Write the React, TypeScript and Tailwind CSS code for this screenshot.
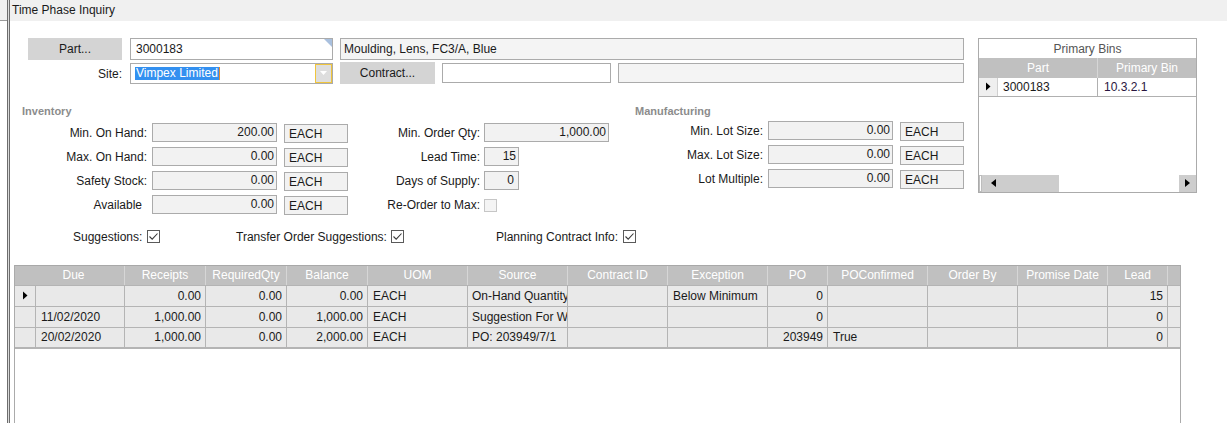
import React from "react";

const Check = ({ disabled = false }: { disabled?: boolean }) =>
  disabled ? (
    <div className="w-[13px] h-[13px] border border-[#c6c6c6] bg-[#f4f4f4]" />
  ) : (
    <div className="w-[13px] h-[13px] border border-[#5a5a5a] bg-white flex items-center justify-center">
      <svg width="11" height="11" viewBox="0 0 11 11">
        <path d="M1.5 5.5 L4.2 8.2 L9.5 2.5" fill="none" stroke="#3a3a3a" strokeWidth="1.1" />
      </svg>
    </div>
  );

const Arrow = () => (
  <svg width="6" height="9" viewBox="0 0 6 9">
    <path d="M1 0.5 L5.5 4.5 L1 8.5 Z" fill="#000" />
  </svg>
);

const Num = ({ v }: { v: string }) => (
  <div className="ml-[5px] w-[125px] h-[19px] border border-[#ababab] bg-[#f2f2f2] flex items-center justify-end pr-[2px] pb-[1px]">
    {v}
  </div>
);
const Each = () => (
  <div className="ml-[7px] mt-[2px] w-[64px] h-[19px] border border-[#ababab] bg-[#f2f2f2] flex items-center pl-[4px] pt-px">
    EACH
  </div>
);

type Row = string[];
const cols = [
  { w: "w-[89px]", a: "l" },
  { w: "w-[81px]", a: "r" },
  { w: "w-[81px]", a: "r" },
  { w: "w-[81px]", a: "r" },
  { w: "w-[100px]", a: "l" },
  { w: "w-[100px]", a: "s" },
  { w: "w-[100px]", a: "l" },
  { w: "w-[100px]", a: "l" },
  { w: "w-[60px]", a: "r" },
  { w: "w-[100px]", a: "l" },
  { w: "w-[90px]", a: "l" },
  { w: "w-[90px]", a: "l" },
  { w: "w-[60px]", a: "r" },
];
const heads = ["Receipts", "RequiredQty", "Balance", "UOM", "Source", "Contract ID", "Exception", "PO", "POConfirmed", "Order By", "Promise Date", "Lead"];
const headW = ["w-[81px]", "w-[81px]", "w-[81px]", "w-[100px]", "w-[100px]", "w-[100px]", "w-[100px]", "w-[60px]", "w-[100px]", "w-[90px]", "w-[90px]", "w-[60px]"];
const rows: Row[] = [
  ["", "0.00", "0.00", "0.00", "EACH", "On-Hand Quantity", "", "Below Minimum", "0", "", "", "", "15"],
  ["11/02/2020", "1,000.00", "0.00", "1,000.00", "EACH", "Suggestion For W", "", "", "0", "", "", "", "0"],
  ["20/02/2020", "1,000.00", "0.00", "2,000.00", "EACH", "PO: 203949/7/1", "", "", "203949", "True", "", "", "0"],
];

export default function App() {
  return (
    <div className="w-[1227px] h-[423px] overflow-hidden bg-white flex font-['Liberation_Sans',Arial,sans-serif] text-[12px] text-[#1a1a1a] leading-[14px]">
      {/* left frame */}
      <div className="w-[7px] flex flex-col">
        <div className="h-[21px] bg-[#f0f0f0] border-b border-[#9a9a9a]" />
      </div>
      <div className="w-px bg-[#6e6e6e]" />
      <div className="w-px bg-[#dcdcdc]" />
      <div className="w-px bg-[#6e6e6e]" />

      <div className="flex-1 flex flex-col">
        <div className="h-[21px] bg-[#f0f0f0] flex items-center pl-[2px]">Time Phase Inquiry</div>

        <div className="flex pt-[17px]">
          {/* left column */}
          <div className="w-[954px] flex flex-col">
            <div className="ml-[18px] flex h-[22px]">
              <div className="w-[94px] bg-[#d4d4d4] flex items-center justify-center">Part...</div>
              <div className="ml-[8px] w-[203px] border border-[#ababab] bg-white relative flex items-center pl-[5px]">
                3000183
                <svg className="absolute right-0 top-0" width="8" height="8" viewBox="0 0 8 8">
                  <path d="M0 0 L8 0 L8 8 Z" fill="#a9c0de" />
                </svg>
              </div>
              <div className="ml-[7px] w-[624px] border border-[#ababab] bg-[#f4f4f4] flex items-center pl-[3px]">
                Moulding, Lens, FC3/A, Blue
              </div>
            </div>
            <div className="ml-[18px] mt-[3px] flex h-[21px]">
              <div className="w-[94px] flex items-center justify-end pt-px">Site:</div>
              <div className="ml-[8px] w-[203px] border border-[#ababab] bg-white flex items-stretch">
                <div className="flex-1 flex items-center pl-[4px]">
                  <span className="bg-[#3390f0] text-white leading-[13px] px-px">Vimpex Limited</span>
                  <span className="w-px h-[13px] bg-[#e08a30]" />
                </div>
                <div className="w-[17px] bg-[#dedede] border border-[#f0c53c] flex items-center justify-center">
                  <svg width="7" height="4" viewBox="0 0 7 4">
                    <path d="M0 0 L7 0 L3.5 4 Z" fill="#fff" />
                  </svg>
                </div>
              </div>
              <div className="ml-[7px] w-[95px] h-[22px] -mt-px bg-[#d4d4d4] flex items-center justify-center">Contract...</div>
              <div className="ml-[7px] w-[169px] h-[20px] border border-[#ababab] bg-white" />
              <div className="ml-[7px] w-[346px] h-[20px] border border-[#ababab] bg-[#f4f4f4]" />
            </div>

            {/* fields */}
            <div className="flex mt-[20px]">
              <div className="ml-[12px] w-[326px] flex flex-col">
                <div className="h-[14px] text-[11px] font-bold text-[#8c8c8c]">Inventory</div>
                <div className="mt-[5px] flex flex-col gap-[5px]">
                  <div className="flex h-[19px] items-center">
                    <div className="w-[125px] text-right pt-px">Min. On Hand:</div>
                    <Num v="200.00" />
                    <Each />
                  </div>
                  <div className="flex h-[19px] items-center">
                    <div className="w-[125px] text-right pt-px">Max. On Hand:</div>
                    <Num v="0.00" />
                    <Each />
                  </div>
                  <div className="flex h-[19px] items-center">
                    <div className="w-[125px] text-right pt-px">Safety Stock:</div>
                    <Num v="0.00" />
                    <Each />
                  </div>
                  <div className="flex h-[19px] items-center">
                    <div className="w-[125px] text-right pr-[5px] pt-px">Available</div>
                    <Num v="0.00" />
                    <Each />
                  </div>
                </div>
              </div>

              <div className="w-[287px] pt-[19px] flex flex-col gap-[5px]">
                <div className="flex h-[19px] items-center">
                  <div className="w-[132px] text-right pt-px">Min. Order Qty:</div>
                  <div className="ml-[4px] w-[125px] h-[19px] border border-[#ababab] bg-[#f2f2f2] flex items-center justify-end pr-[2px] pb-[1px]">1,000.00</div>
                </div>
                <div className="flex h-[19px] items-center">
                  <div className="w-[132px] text-right pt-px">Lead Time:</div>
                  <div className="ml-[4px] w-[35px] h-[19px] border border-[#ababab] bg-[#f2f2f2] flex items-center justify-end pr-[2px] pb-[1px]">15</div>
                </div>
                <div className="flex h-[19px] items-center">
                  <div className="w-[132px] text-right pt-px">Days of Supply:</div>
                  <div className="ml-[4px] w-[35px] h-[19px] border border-[#ababab] bg-[#f2f2f2] flex items-center justify-end pr-[4px] pb-[1px]">0</div>
                </div>
                <div className="flex h-[19px] items-center">
                  <div className="w-[132px] text-right pt-px">Re-Order to Max:</div>
                  <div className="ml-[4px] mt-[2px]">
                    <Check disabled />
                  </div>
                </div>
              </div>

              <div className="w-[329px] flex flex-col">
                <div className="h-[14px] text-[11px] font-bold text-[#8c8c8c]">Manufacturing</div>
                <div className="mt-[3px] flex flex-col gap-[5px]">
                  <div className="flex h-[19px] items-center">
                    <div className="w-[128px] text-right pt-px">Min. Lot Size:</div>
                    <Num v="0.00" />
                    <Each />
                  </div>
                  <div className="flex h-[19px] items-center">
                    <div className="w-[128px] text-right pt-px">Max. Lot Size:</div>
                    <Num v="0.00" />
                    <Each />
                  </div>
                  <div className="flex h-[19px] items-center">
                    <div className="w-[128px] text-right pt-px">Lot Multiple:</div>
                    <Num v="0.00" />
                    <Each />
                  </div>
                </div>
              </div>
            </div>
          </div>

          {/* primary bins */}
          <div className="ml-[14px] w-[219px] h-[155px] border border-[#ababab] flex flex-col bg-white">
            <div className="h-[19px] flex items-center justify-center text-[#555] pt-px">Primary Bins</div>
            <div className="h-[20px] bg-[#c0c0c0] flex text-white">
              <div className="w-[119px] flex items-center justify-center border-r border-[#d6d6d6]">Part</div>
              <div className="flex-1 flex items-center justify-center">Primary Bin</div>
            </div>
            <div className="h-[19px] flex border-b border-[#b0b0b0]">
              <div className="w-[19px] bg-[#efefef] border-r border-[#d0d0d0] flex items-center justify-center">
                <Arrow />
              </div>
              <div className="w-[100px] border-r border-[#b0b0b0] flex items-center pl-[5px]">3000183</div>
              <div className="flex-1 flex items-center pl-[6px] text-[#2a1640]">10.3.2.1</div>
            </div>
            <div className="flex-1" />
            <div className="h-[17px] flex">
              <div className="w-[3px] border border-[#bdbdbd] bg-white" />
              <div className="w-[77px] bg-[#cdcdcd] flex items-center pl-[9px]">
                <svg width="5" height="8" viewBox="0 0 5 8">
                  <path d="M5 0 L0 4 L5 8 Z" fill="#000" />
                </svg>
              </div>
              <div className="flex-1 bg-white" />
              <div className="w-[17px] bg-[#cdcdcd] flex items-center justify-center">
                <svg width="5" height="8" viewBox="0 0 5 8">
                  <path d="M0 0 L5 4 L0 8 Z" fill="#000" />
                </svg>
              </div>
            </div>
          </div>
        </div>

        {/* checkboxes */}
        <div className="mt-[16px] h-[13px] flex items-center">
          <div className="ml-[63px] w-[163px] flex items-center">
            <span className="pt-px">Suggestions:</span>
            <div className="ml-[5px]"><Check /></div>
          </div>
          <div className="w-[260px] flex items-center">
            <span className="pt-px">Transfer Order Suggestions:</span>
            <div className="ml-[4px]"><Check /></div>
          </div>
          <div className="flex items-center">
            <span className="pt-px">Planning Contract Info:</span>
            <div className="ml-[5px]"><Check /></div>
          </div>
        </div>

        {/* grid */}
        <div className="mt-[22px] ml-[4px] w-[1167px] h-[160px] border-x border-[#ababab] flex flex-col bg-white">
          <div className="h-[20px] bg-[#c0c0c0] text-white flex border-t border-[#a8a8a8]">
            <div className="w-[110px] flex items-center justify-center pl-[8px] border-r border-[#d6d6d6]">Due</div>
            {heads.map((h, i) => (
              <div key={h} className={`${headW[i]} flex items-center justify-center border-r border-[#d6d6d6]`}>
                {h}
              </div>
            ))}
            <div className="flex-1" />
          </div>
          {rows.map((r, ri) => (
            <div
              key={ri}
              className={
                ri === rows.length - 1
                  ? "h-[22px] flex bg-[#e9e9e9] border-t border-b-2 border-[#b4b4b4]"
                  : "h-[21px] flex bg-[#e9e9e9] border-t border-[#b4b4b4]"
              }
            >
              <div className="w-[21px] border-r border-[#b4b4b4] flex items-center justify-center">
                {ri === 0 && <Arrow />}
              </div>
              {r.map((c, ci) => (
                <div
                  key={ci}
                  className={`${cols[ci].w} border-r border-[#b4b4b4] flex items-center overflow-hidden whitespace-nowrap ${
                    cols[ci].a === "r" ? "justify-end pr-[4px]" : cols[ci].a === "s" ? "pl-[4px]" : "pl-[5px]"
                  }`}
                >
                  {c}
                </div>
              ))}
              <div className="flex-1" />
            </div>
          ))}
          <div className="flex-1" />
        </div>
      </div>
    </div>
  );
}
